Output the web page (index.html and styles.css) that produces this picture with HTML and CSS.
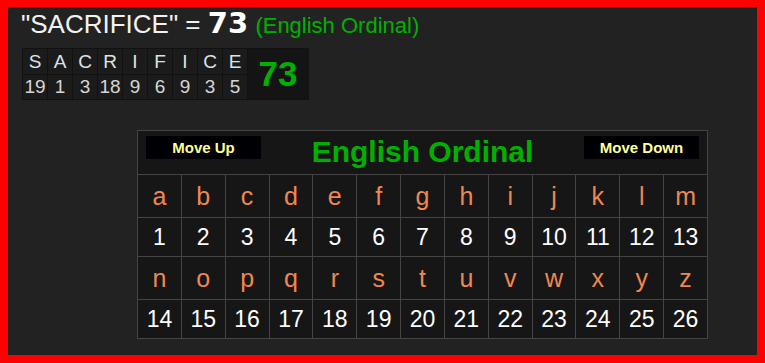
FILE: index.html
```html
<!DOCTYPE html>
<html>
<head>
<meta charset="utf-8">
<link rel="stylesheet" href="styles.css">
</head>
<body>
<div class="frame">
  <div class="title">"SACRIFICE" = <span class="total">73</span> <span class="cipher-name">(English Ordinal)</span></div>
  <table class="breakdown">
    <tr class="b-letters">
      <td>S</td><td>A</td><td>C</td><td>R</td><td>I</td><td>F</td><td>I</td><td>C</td><td>E</td>
      <td class="b-sum" rowspan="2">73</td>
    </tr>
    <tr class="b-values">
      <td>19</td><td>1</td><td>3</td><td>18</td><td>9</td><td>6</td><td>9</td><td>3</td><td>5</td>
    </tr>
  </table>
  <table class="chart">
    <tr>
      <td class="chart-head" colspan="13">
        <div class="head-grid">
          <button class="move">Move Up</button>
          <div class="chart-title">English Ordinal</div>
          <button class="move">Move Down</button>
        </div>
      </td>
    </tr>
    <tr class="c-letters"><td>a</td><td>b</td><td>c</td><td>d</td><td>e</td><td>f</td><td>g</td><td>h</td><td>i</td><td>j</td><td>k</td><td>l</td><td>m</td></tr>
    <tr class="c-values"><td>1</td><td>2</td><td>3</td><td>4</td><td>5</td><td>6</td><td>7</td><td>8</td><td>9</td><td>10</td><td>11</td><td>12</td><td>13</td></tr>
    <tr class="c-letters"><td>n</td><td>o</td><td>p</td><td>q</td><td>r</td><td>s</td><td>t</td><td>u</td><td>v</td><td>w</td><td>x</td><td>y</td><td>z</td></tr>
    <tr class="c-values"><td>14</td><td>15</td><td>16</td><td>17</td><td>18</td><td>19</td><td>20</td><td>21</td><td>22</td><td>23</td><td>24</td><td>25</td><td>26</td></tr>
  </table>
</div>
</body>
</html>
```

FILE: styles.css
```css
html, body {
  margin: 0;
  padding: 0;
}
body {
  font-family: "Liberation Sans", Arial, sans-serif;
}
.frame {
  box-sizing: border-box;
  width: 765px;
  height: 363px;
  border: 8px solid #ff0000;
  border-top-width: 7px;
  background: #222222;
  padding: 1px 0 0 13px;
  overflow: hidden;
}
.title {
  font-size: 26px;
  line-height: 30px;
  color: #f2f2f2;
  white-space: nowrap;
}
.total {
  font-family: "DejaVu Sans", sans-serif;
  font-weight: bold;
  font-size: 29px;
  color: #ffffff;
}
.cipher-name {
  font-size: 22px;
  color: #00b000;
}
.breakdown {
  margin: 7px 0 0 1px;
  border-collapse: separate;
  border-spacing: 1px;
  background: #111111;
}
.breakdown td {
  width: 24px;
  padding: 0;
  text-align: center;
  font-size: 19px;
  color: #dde2e8;
  background: #1b1b1b;
}
.b-letters td {
  height: 25px;
}
.b-values td {
  height: 24px;
  color: #d6d6d6;
}
.breakdown td.b-sum {
  width: 60px;
  background: #141414;
  font-size: 35px;
  font-weight: bold;
  color: #00b000;
  vertical-align: middle;
}
.chart {
  margin: 30px 0 0 116px;
  width: 571px;
  table-layout: fixed;
  border-collapse: collapse;
  background: #161616;
}
.chart td {
  border: 1px solid #444444;
  padding: 0;
  text-align: center;
}
.chart-head {
  height: 43px;
  vertical-align: top;
}
.head-grid {
  display: grid;
  grid-template-columns: 115px 1fr 115px;
  align-items: start;
  padding: 5px 8px 0 8px;
}
.move {
  width: 115px;
  height: 23px;
  margin: 0;
  padding: 0;
  border: none;
  background: #000004;
  color: #ffff99;
  font-family: "Liberation Sans", Arial, sans-serif;
  font-weight: bold;
  font-size: 15px;
}
.chart-title {
  font-size: 30px;
  line-height: 32px;
  font-weight: bold;
  color: #00b000;
  white-space: nowrap;
}
.c-letters td {
  height: 42px;
  font-size: 25px;
  color: #f0874f;
}
.c-values td {
  height: 38px;
  font-size: 23px;
  color: #ffffff;
}
```
